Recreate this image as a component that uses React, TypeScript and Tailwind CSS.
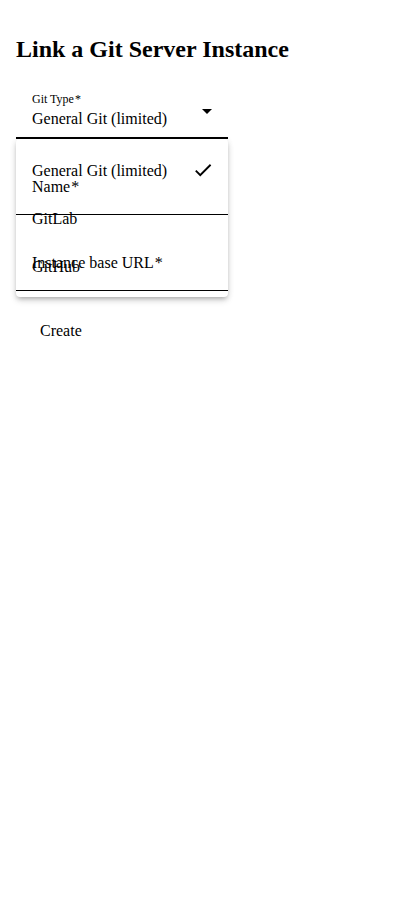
const serif = { fontFamily: '"Liberation Serif", "Times New Roman", serif' }

const options = ['General Git (limited)', 'GitLab', 'GitHub']

function ArrowDropDown() {
  return (
    <svg className="w-6 h-6 shrink-0" viewBox="0 0 24 24" fill="currentColor">
      <path d="M7 10l5 5 5-5z" />
    </svg>
  )
}

function CheckIcon() {
  return (
    <svg className="w-[22px] h-[22px] shrink-0" viewBox="0 0 24 24" fill="currentColor">
      <path d="M9 16.17 4.83 12l-1.42 1.41L9 19 21 7l-1.41-1.41z" />
    </svg>
  )
}

function TextField({ label }: { label: string }) {
  return (
    <div className="relative z-10 border-b border-black px-4 pt-[38px] pb-[18px]">
      <label className="block text-[16px] leading-[19px]">
        {label}
        <span className="ml-px">*</span>
      </label>
    </div>
  )
}

export default function App() {
  const selected = options[0]

  return (
    <div className="min-h-[920px] bg-white text-black" style={serif}>
      <div className="p-4">
        <h1 className="mt-[19px] text-[24px] leading-[28px] font-bold">Link a Git Server Instance</h1>

        <form className="relative w-[212px] mt-[29px]" onSubmit={(e) => e.preventDefault()}>
          {/* select field */}
          <div className="relative">
            <div className="border-b-2 border-black pl-4 pb-[9px]">
              <div className="text-[12px] leading-[14px]">
                Git Type<span className="ml-px">*</span>
              </div>
              <div className="flex items-start justify-between mt-[3px]">
                <span className="text-[16px] leading-[19px]">{selected}</span>
                <span className="-mt-[10px] mr-[9px]">
                  <ArrowDropDown />
                </span>
              </div>
            </div>

            {/* open menu */}
            <ul className="absolute left-0 top-full z-0 w-[212px] bg-white rounded py-[7px] shadow-[0_3px_4px_-2px_rgba(0,0,0,0.2),0_4px_6px_0_rgba(0,0,0,0.12),0_1px_6px_0_rgba(0,0,0,0.1)]">
              {options.map((opt) => (
                <li key={opt} className="h-12 px-4 flex items-center justify-between text-[16px] leading-[19px]">
                  <span>{opt}</span>
                  {opt === selected && (
                    <span className="mr-[-2px]">
                      <CheckIcon />
                    </span>
                  )}
                </li>
              ))}
            </ul>
          </div>

          <TextField label="Name" />
          <TextField label="Instance base URL" />

          <button type="submit" className="relative z-10 ml-4 mt-[21px] h-9 px-2 text-[16px] leading-[19px]">
            Create
          </button>
        </form>
      </div>
    </div>
  )
}
